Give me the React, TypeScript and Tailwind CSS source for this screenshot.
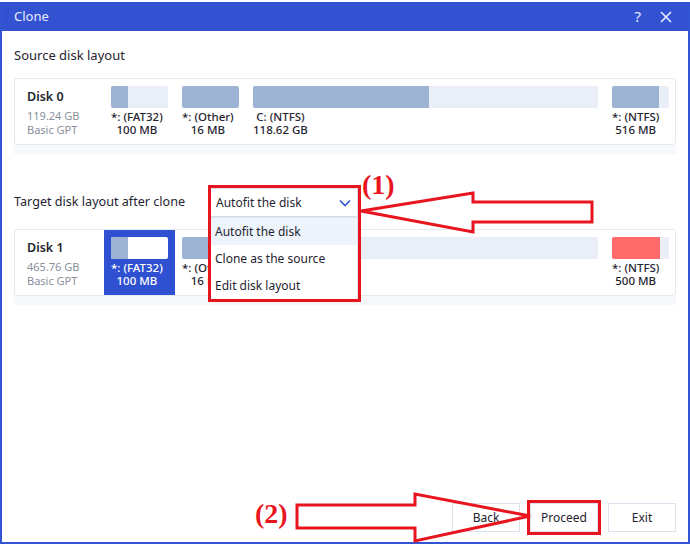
import React from 'react';

type Part = { label: string; size: string; bar: number; fill: number; color?: string };

const sourceParts: Part[] = [
  { label: '*: (FAT32)', size: '100 MB', bar: 57, fill: 17 },
  { label: '*: (Other)', size: '16 MB', bar: 57, fill: 57 },
  { label: 'C: (NTFS)', size: '118.62 GB', bar: 345, fill: 176 },
  { label: '*: (NTFS)', size: '516 MB', bar: 57, fill: 47 },
];

const targetParts: Part[] = [
  { label: '*: (FAT32)', size: '100 MB', bar: 57, fill: 17 },
  { label: '*: (Other)', size: '16 MB', bar: 57, fill: 57 },
  { label: '', size: '', bar: 345, fill: 0 },
  { label: '*: (NTFS)', size: '500 MB', bar: 57, fill: 48, color: '#ff6b6b' },
];

const DiskCard = ({ name, size, parts, selected }: { name: string; size: string; parts: Part[]; selected?: number }) => (
  <div>
    <div className="flex h-[67px] rounded-[3px] border border-[#e4e8f1] bg-white">
      <div className="w-[89px] shrink-0 pl-[12px] pt-[9px]">
        <div className="text-[12.5px] font-semibold text-[#1f2430] leading-[17px]">{name}</div>
        <div className="mt-[4px] text-[11px] leading-[14px] text-[#8a8f9c]">{size}</div>
        <div className="text-[11px] leading-[14px] text-[#8a8f9c]">Basic GPT</div>
      </div>
      {parts.map((p, i) => {
        const sel = i === selected;
        return (
          <div key={i} className={`shrink-0 px-[7px] pt-[7px] ${sel ? 'bg-[#2e50d1]' : ''}`}>
            <div className={`flex h-[22px] rounded-[2px] overflow-hidden ${sel ? 'bg-white' : 'bg-[#eaeef6]'}`} style={{ width: p.bar }}>
              <div className="h-full" style={{ width: p.fill, background: p.color ?? '#9db3d4' }} />
            </div>
            {p.label && (
              <div className={`mt-[2px] flex w-fit flex-col items-center text-[11.5px] leading-[13px] font-medium ${sel ? 'text-white' : 'text-[#1f2430]'}`}>
                <span>{p.label}</span>
                <span>{p.size}</span>
              </div>
            )}
          </div>
        );
      })}
    </div>
    <div className="h-[9px] bg-[#f7f8fb]" />
  </div>
);

const App = () => {
  return (
    <div className="relative w-[690px] h-[544px] bg-white overflow-hidden font-['Noto_Sans',sans-serif]">
      <div className="h-[2px] bg-white" />
      <div className="flex h-[542px] flex-col border-x-2 border-b-2 border-[#3355d5]">
        {/* Title bar */}
        <div className="flex h-[29px] items-center justify-between bg-[#3352d2] pl-[12px] pr-[16px] text-[#e9edff]">
          <span className="text-[13px]">Clone</span>
          <div className="flex items-center gap-[19px]">
            <span className="text-[15px] leading-none">?</span>
            <svg width="12" height="12" viewBox="0 0 12 12" stroke="#e9edff" strokeWidth="1.6">
              <path d="M1 1L11 11M11 1L1 11" />
            </svg>
          </div>
        </div>

        <div className="flex flex-1 flex-col px-[12px]">
          <div className="mt-[14px] text-[13px] leading-[20px] text-[#1f2430]">Source disk layout</div>
          <div className="mt-[13px]">
            <DiskCard name="Disk 0" size="119.24 GB" parts={sourceParts} />
          </div>

          <div className="mt-[34px] flex items-center">
            <div className="w-[196px] text-[12.6px] text-[#1f2430]">Target disk layout after clone</div>
            <div className="relative">
              <div className="flex h-[29px] w-[148px] items-center justify-between border border-[#d9dfea] bg-white pl-[5px] pr-[6px] text-[12px] text-[#1f2430]">
                <span>Autofit the disk</span>
                <svg width="12" height="8" viewBox="0 0 12 8" fill="none" stroke="#2f55d4" strokeWidth="1.6">
                  <path d="M1 1.5L6 6.5L11 1.5" />
                </svg>
              </div>
              <div className="absolute left-0 top-full z-10 w-[148px] border border-[#dfe4ee] bg-white text-[12px] text-[#1f2430] shadow-sm">
                <div className="flex h-[27px] items-center bg-[#eef4fb] px-[4px]">Autofit the disk</div>
                <div className="flex h-[27px] items-center px-[4px]">Clone as the source</div>
                <div className="flex h-[27px] items-center px-[4px]">Edit disk layout</div>
              </div>
              <div className="pointer-events-none absolute left-[-2px] top-[-3px] z-20 h-[117px] w-[153px] border-[3px] border-[#e8141e]" />
            </div>
          </div>

          <div className="mt-[12px]">
            <DiskCard name="Disk 1" size="465.76 GB" parts={targetParts} selected={0} />
          </div>

          <div className="mt-auto mb-[10px] flex justify-end gap-[10px]">
            {['Back', 'Proceed', 'Exit'].map((b) => (
              <button key={b} className="relative flex h-[29px] w-[68px] items-center justify-center border border-[#dde3ee] bg-white text-[12px] text-[#1f2430]">
                {b}
                {b === 'Proceed' && <span className="absolute inset-[-4px] border-[3px] border-[#e8141e]" />}
              </button>
            ))}
          </div>
        </div>
      </div>

      {/* Annotations */}
      <svg className="pointer-events-none absolute left-0 top-0 z-30" width="690" height="544" fill="none" stroke="#e8141e" strokeWidth="3" strokeLinejoin="miter">
        <polygon points="361,211 473,193 473,202 592,202 592,222 473,222 473,232" />
        <polygon points="530,516 415,494 415,505 297,505 297,528 415,528 415,541" />
      </svg>
      <div className="pointer-events-none absolute left-[362px] top-[168px] z-30 font-['Liberation_Serif',serif] text-[28px] font-bold leading-[34px] text-[#e8141e]">(1)</div>
      <div className="pointer-events-none absolute left-[255px] top-[497px] z-30 font-['Liberation_Serif',serif] text-[28px] font-bold leading-[34px] text-[#e8141e]">(2)</div>
    </div>
  );
};

export default App;
